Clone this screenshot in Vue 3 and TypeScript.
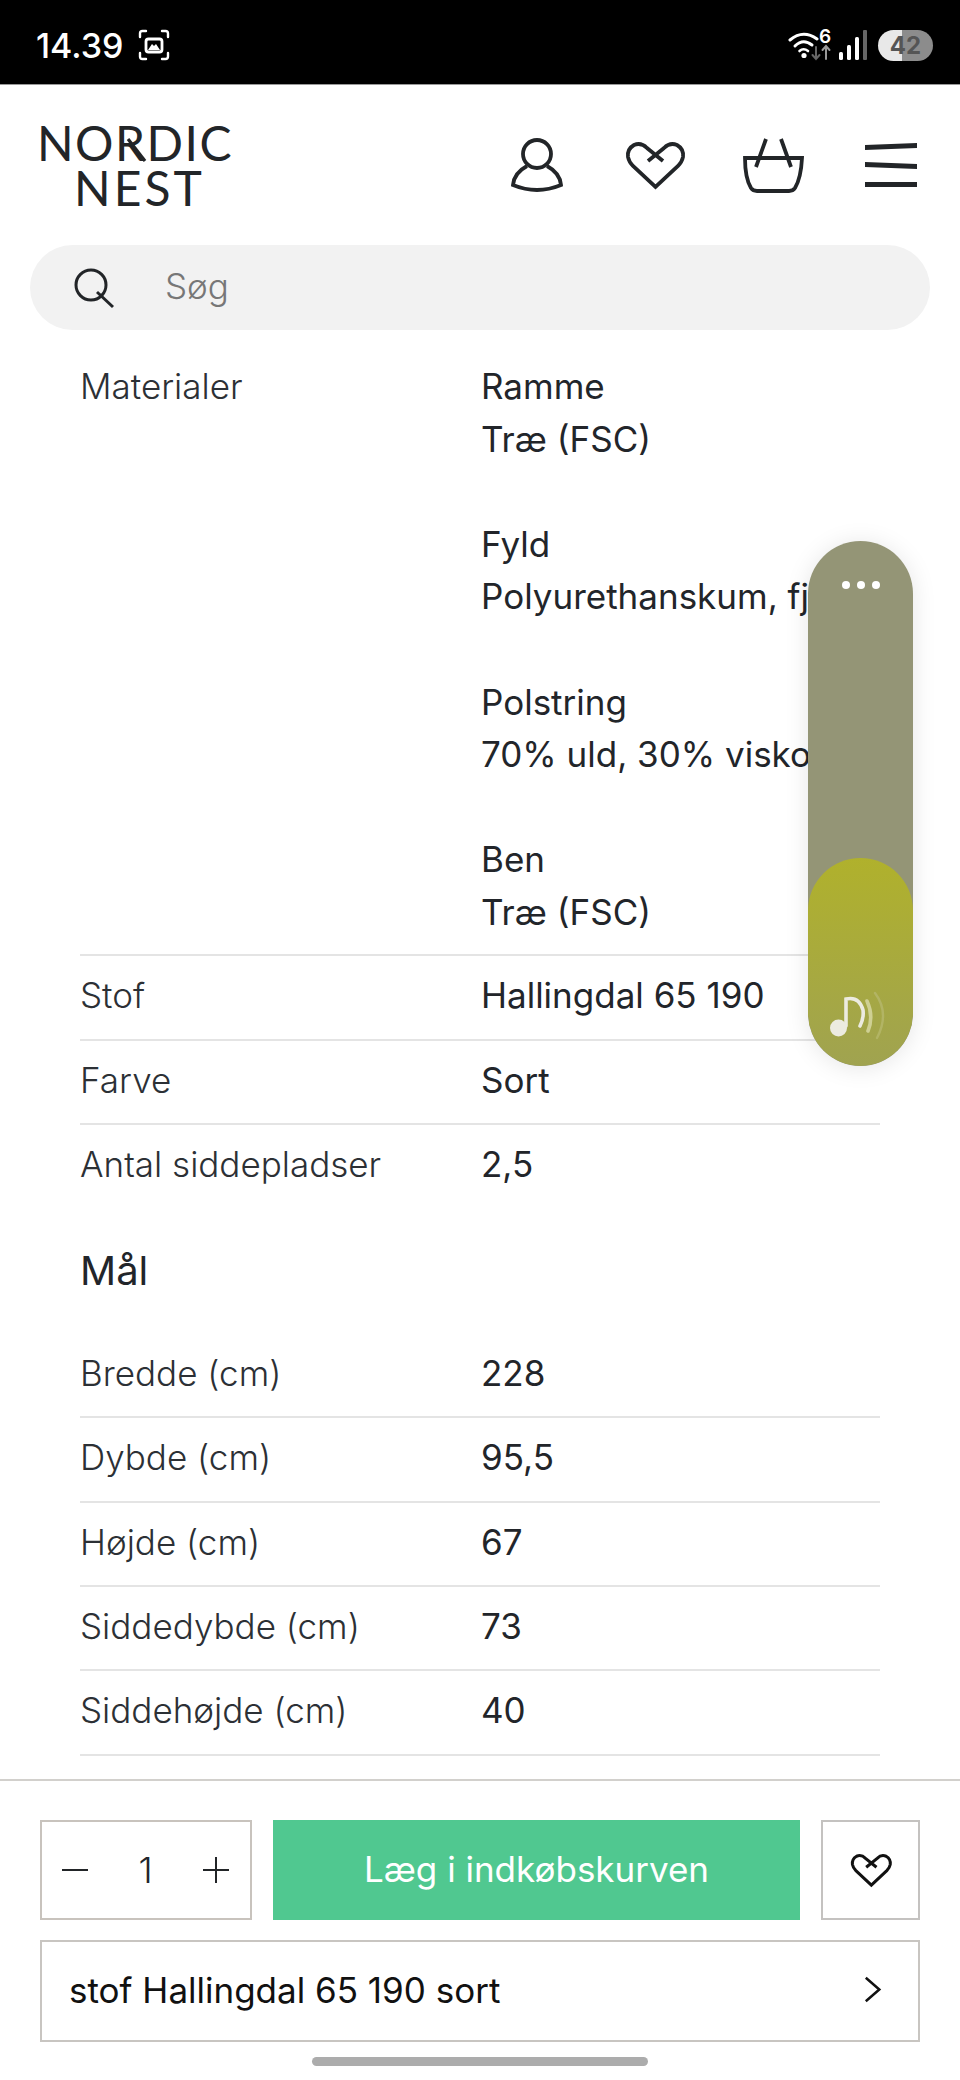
<template>
  <div class="page">
    <div class="status">
      <div class="status-left">
        <span class="time">14.39</span>
        <svg class="shot" viewBox="0 0 32 32" width="32" height="32" fill="none" stroke="#fff" stroke-width="2.4" stroke-linecap="round">
          <path d="M2 8V4.500Q2 2 4.500 2H8M24 2h3.500Q30 2 30 4.500V8M30 24v3.500Q30 30 27.500 30H24M8 30H4.500Q2 30 2 27.500V24" />
          <rect x="8" y="10" width="16" height="13" rx="2.500" stroke-width="2.800" />
          <path d="M10 21l4-6 2 2 2-2 4 6z" fill="#fff" stroke="none" />
        </svg>
      </div>
      <div class="status-right">
        <svg viewBox="0 0 46 34" width="46" height="34" fill="none" stroke-linecap="round">
          <path d="M3 12Q16 1 30 11" stroke="#fff" stroke-width="3" />
          <path d="M8 18Q16 10 25 17" stroke="#fff" stroke-width="3" />
          <path d="M12.500 23Q16.500 19.500 21 23" stroke="#fff" stroke-width="2.600" />
          <circle cx="17" cy="27.500" r="2.600" fill="#fff" />
          <path d="M29 19v12m-3.500-4l3.500 4 3.500-4" stroke="#666" stroke-width="2" />
          <path d="M39 31V18m-3.500 4l3.500-4 3.500 4" stroke="#999" stroke-width="2" />
        </svg>
        <span class="net">6</span>
        <svg class="bars" viewBox="0 0 28 30" width="28" height="30" fill="#fff">
          <rect x="0" y="22" width="4" height="8" rx="1.500" />
          <rect x="8" y="15" width="4" height="15" rx="1.500" />
          <rect x="16" y="7" width="4" height="23" rx="1.500" />
          <rect x="24" y="0" width="4" height="30" rx="1" fill="#666" />
        </svg>
        <span class="battery">42</span>
      </div>
    </div>

    <header class="header">
      <div class="logo">
        <span>NORDIC</span>
        <span class="logo-nest">NEST</span>
        <svg class="logo-tail" viewBox="0 0 22 26" width="22" height="26" fill="none" stroke="#222528" stroke-width="3.200"><path d="M2 2l17 22" /></svg>
      </div>
      <nav class="icons">
        <svg viewBox="0 0 64 64" width="64" height="64" fill="none" stroke="#222528" stroke-width="3.800">
          <circle cx="32" cy="21" r="14" />
          <path d="M22 33Q9 40 8 52Q32 62 56 52Q55 40 42 33" />
        </svg>
        <svg viewBox="0 0 64 64" width="64" height="64" fill="none" stroke="#222528" stroke-width="3.800">
          <path d="M25 28L41 15Q47 9 54 12Q61 16 60 24Q59 29 55 33L32.500 54L10 33Q6 29 5 24Q4 16 11 12Q18 9 24 15L40 28" />
        </svg>
        <svg viewBox="0 0 64 64" width="64" height="64" fill="none" stroke="#222528" stroke-width="3.800">
          <path d="M4 25H61Q60 45 54 55Q52 58 48 58H16Q12 58 10 55Q4 45 4 25Z" />
          <path d="M25 6L15 34M40 6L50 34" />
        </svg>
        <svg viewBox="0 0 64 64" width="64" height="64" fill="#222528">
          <path d="M6 12L58 10V15L6 17ZM6 29L58 31V36L6 34ZM6 49H58V54H6Z" />
        </svg>
      </nav>
    </header>

    <div class="search">
      <svg viewBox="0 0 42 42" width="42" height="42" fill="none" stroke="#222528" stroke-width="3">
        <circle cx="18" cy="18" r="15" />
        <path d="M24 25L40 40" />
      </svg>
      <span class="placeholder">Søg</span>
    </div>

    <main class="content">
      <div class="row first">
        <span class="label">Materialer</span>
        <div class="value">
          <template v-for="(m, i) in materials" :key="m.name">
            <p :class="{ gap: i > 0 }">{{ m.name }}</p>
            <p>{{ m.text }}</p>
          </template>
        </div>
      </div>
      <div v-for="s in specs" :key="s.label" class="row">
        <span class="label">{{ s.label }}</span>
        <span class="value">{{ s.value }}</span>
      </div>

      <h2 class="title">Mål</h2>

      <div v-for="s in sizes" :key="s.label" class="row">
        <span class="label">{{ s.label }}</span>
        <span class="value">{{ s.value }}</span>
      </div>

      <div class="float">
        <div class="dots"><i></i><i></i><i></i></div>
        <div class="float-inner">
          <svg viewBox="0 0 64 56" width="64" height="56" fill="none" stroke-linecap="round">
            <circle cx="10.500" cy="40" r="8.500" fill="#ecebe0" />
            <path d="M18 38V11Q31 8 35 22Q36 30 32 38" stroke="#ecebe0" stroke-width="3.600" />
            <path d="M39 13Q46 28 40 43" stroke="#cfd093" stroke-width="3.600" />
            <path d="M47 5Q62 25 49 50" stroke="#b2b464" stroke-width="2.400" />
          </svg>
        </div>
      </div>
    </main>

    <footer class="footer">
      <div class="buy">
        <div class="qty">
          <svg viewBox="0 0 28 28" width="28" height="28" stroke="#222528" stroke-width="2"><path d="M1 14H27" /></svg>
          <span>1</span>
          <svg viewBox="0 0 28 28" width="28" height="28" stroke="#222528" stroke-width="2"><path d="M1 14H27M14 1V27" /></svg>
        </div>
        <button class="add">Læg i indkøbskurven</button>
        <button class="fav">
          <svg viewBox="0 0 64 64" width="44" height="44" fill="none" stroke="#111" stroke-width="4.400">
            <path d="M25 28L41 15Q47 9 54 12Q61 16 60 24Q59 29 55 33L32.500 54L10 33Q6 29 5 24Q4 16 11 12Q18 9 24 15L40 28" />
          </svg>
        </button>
      </div>
      <div class="variant">
        <span>stof Hallingdal 65 190 sort</span>
        <svg viewBox="0 0 20 30" width="18" height="27" fill="none" stroke="#111" stroke-width="2.800"><path d="M2 2L17 15L2 28" /></svg>
      </div>
      <div class="home"></div>
    </footer>
  </div>
</template>

<script setup lang="ts">
const materials = [
  { name: "Ramme", text: "Træ (FSC)" },
  { name: "Fyld", text: "Polyurethanskum, fjer" },
  { name: "Polstring", text: "70% uld, 30% viskose" },
  { name: "Ben", text: "Træ (FSC)" },
];

const specs = [
  { label: "Stof", value: "Hallingdal 65 190" },
  { label: "Farve", value: "Sort" },
  { label: "Antal siddepladser", value: "2,5" },
];

const sizes = [
  { label: "Bredde (cm)", value: "228" },
  { label: "Dybde (cm)", value: "95,5" },
  { label: "Højde (cm)", value: "67" },
  { label: "Siddedybde (cm)", value: "73" },
  { label: "Siddehøjde (cm)", value: "40" },
];
</script>

<style>
body {
  background: #fff;
}
</style>

<style scoped>
.page {
  width: 960px;
  height: 2080px;
  display: flex;
  flex-direction: column;
  overflow: hidden;
  font-family: Inter, "Liberation Sans", sans-serif;
  color: #22252a;
  background: #fff;
}

.status {
  height: 85px;
  flex: none;
  box-sizing: border-box;
  background: #000;
  border-bottom: 1px solid #999;
  display: flex;
  justify-content: space-between;
  align-items: center;
  padding: 6px 27px 0 36px;
  color: #fff;
}
.status-left {
  display: flex;
  align-items: center;
  gap: 15px;
}
.time {
  font-size: 34px;
  font-weight: 500;
}
.status-right {
  display: flex;
  align-items: center;
  position: relative;
}
.net {
  position: absolute;
  left: 32px;
  top: -3px;
  font-size: 19px;
  font-weight: 600;
}
.bars {
  margin-left: 6px;
  margin-right: 11px;
}
.battery {
  width: 55px;
  height: 31px;
  border-radius: 16px;
  background: linear-gradient(90deg, #e8e8e8 0 43%, #8c8c8c 43% 100%);
  color: #555;
  font-size: 24px;
  font-weight: 700;
  line-height: 31px;
  text-align: center;
}

.header {
  height: 160px;
  flex: none;
  box-sizing: border-box;
  display: flex;
  justify-content: space-between;
  align-items: center;
  padding: 0 37px 0 40px;
}
.logo {
  position: relative;
  width: 190px;
  display: flex;
  flex-direction: column;
  align-items: center;
  font-family: Lato, sans-serif;
  font-size: 48px;
  line-height: 45px;
  letter-spacing: 1.500px;
  color: #222528;
}
.logo-nest {
  margin-left: 9px;
  letter-spacing: 3px;
}
.logo-tail {
  position: absolute;
  left: 86px;
  top: 17px;
}
.icons {
  display: flex;
  gap: 54px;
}

.search {
  height: 85px;
  flex: none;
  margin: 0 30px;
  box-sizing: border-box;
  border-radius: 43px;
  background: #f2f2f2;
  display: flex;
  align-items: center;
  padding-left: 43px;
  gap: 50px;
}
.placeholder {
  font-size: 35px;
  font-weight: 300;
  color: #777;
  margin-bottom: 4px;
}

.content {
  flex: 1;
  position: relative;
  padding: 30px 80px 0;
  overflow: hidden;
}
.row {
  display: grid;
  grid-template-columns: 401px 1fr;
  padding: 13px 0 16.500px;
  border-bottom: 2px solid #e4e4e4;
  font-size: 35px;
  line-height: 52.800px;
}
.row.first {
  padding: 0 0 15.700px;
  line-height: 52.600px;
}
.row:nth-child(4) {
  border-bottom: none;
}
.label {
  font-weight: 300;
  color: #2c3035;
}
.value {
  font-weight: 400;
  white-space: nowrap;
}
.value p {
  margin: 0;
}
.value p.gap {
  margin-top: 52.600px;
}
.title {
  margin: 38px 0 37px;
  font-size: 40px;
  line-height: 52px;
  font-weight: 400;
}

.float {
  position: absolute;
  left: 808px;
  top: 211px;
  width: 105px;
  height: 525px;
  border-radius: 53px;
  background: #949576;
  box-shadow: 0 2px 24px rgba(0, 0, 0, 0.1);
  overflow: hidden;
}
.dots {
  display: flex;
  justify-content: center;
  gap: 7px;
  margin-top: 40px;
}
.dots i {
  width: 8px;
  height: 8px;
  border-radius: 50%;
  background: #fff;
}
.float-inner {
  position: absolute;
  left: 0;
  right: 0;
  bottom: 0;
  height: 208px;
  border-radius: 53px;
  background: linear-gradient(180deg, #b0b12c, #a0a350);
}
.float-inner svg {
  position: absolute;
  left: 20px;
  top: 130px;
}

.footer {
  height: 301px;
  flex: none;
  box-sizing: border-box;
  border-top: 2px solid #d2d0cc;
  padding: 39px 40px 0;
  background: #fff;
}
.buy {
  display: flex;
  gap: 21px;
  height: 100px;
}
.qty {
  width: 212px;
  box-sizing: border-box;
  border: 2px solid #c8c3bd;
  display: flex;
  align-items: center;
  justify-content: space-between;
  padding: 0 20px 0 19px;
  font-size: 36px;
  font-weight: 300;
}
.add {
  width: 527px;
  border: none;
  background: #50c890;
  color: #fff;
  font: inherit;
  font-size: 35px;
  padding: 0 0 2px;
}
.fav {
  width: 99px;
  box-sizing: border-box;
  border: 2px solid #c4c2c0;
  background: #fff;
  display: flex;
  align-items: center;
  justify-content: center;
  padding: 0;
}
.variant {
  margin-top: 20px;
  height: 102px;
  box-sizing: border-box;
  border: 2px solid #c8c5c1;
  display: flex;
  align-items: center;
  justify-content: space-between;
  padding: 0 36px 3px 27px;
  font-size: 35px;
  color: #111;
}
.home {
  width: 336px;
  height: 9px;
  border-radius: 5px;
  background: #acacac;
  margin: 15px auto 0;
}
</style>
